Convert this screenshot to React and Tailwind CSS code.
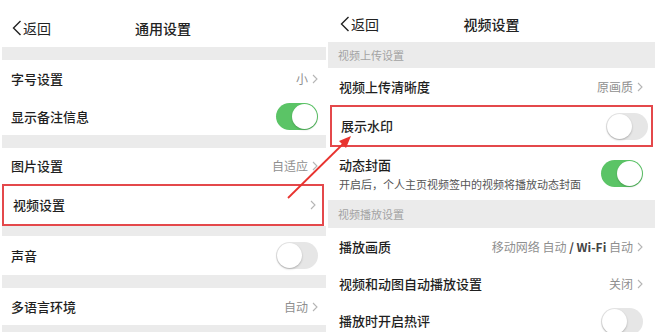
import React from "react";

const font = { fontFamily: '"Noto Sans CJK SC", "Noto Sans", sans-serif' };

function Chevron() {
  return (
    <svg width="6" height="10" viewBox="0 0 6 10" className="ml-[4px] shrink-0">
      <polyline points="1,1 5,5 1,9" fill="none" stroke="#b5b5b5" strokeWidth="1.1" />
    </svg>
  );
}

function BackChevron() {
  return (
    <svg width="10" height="16" viewBox="0 0 10 16" className="shrink-0">
      <polyline points="8.5,1 1.5,8 8.5,15" fill="none" stroke="#222" strokeWidth="1.4" />
    </svg>
  );
}

function Toggle({ on }) {
  return on ? (
    <div className="w-[42px] h-[27px] rounded-full bg-[#5bc466] flex items-center justify-end pr-[1px]">
      <div className="w-[25px] h-[25px] rounded-full bg-white shadow-[0_1px_2px_rgba(0,0,0,0.2)]" />
    </div>
  ) : (
    <div className="w-[42px] h-[27px] rounded-full bg-[#e6e6e6] flex items-center pl-[1px]">
      <div className="w-[25px] h-[25px] rounded-full bg-white shadow-[0_1px_2px_rgba(0,0,0,0.25)]" />
    </div>
  );
}

function Row({ label, value, toggle, h, boxed, pl = "pl-[11px]", pr = "pr-[8px]" }) {
  return (
    <div
      className={`shrink-0 flex items-center justify-between ${pl} ${pr} ${h} ${
        boxed ? "border-2 border-[#e4484b] mx-[2px]" : ""
      }`}
    >
      <span className="text-[13px] font-medium text-[#1f1f1f]">{label}</span>
      {toggle !== undefined ? (
        <Toggle on={toggle} />
      ) : (
        <div className="flex items-center text-[12px] text-[#8f8f8f]">
          {value}
          <Chevron />
        </div>
      )}
    </div>
  );
}

function Section({ title, h }) {
  return (
    <div className={`shrink-0 bg-[#ebebeb] flex items-center pl-[10px] text-[11px] text-[#a3a3a3] ${h}`}>
      {title}
    </div>
  );
}

function Gap({ h }) {
  return <div className={`shrink-0 bg-[#ebebeb] ml-[2px] ${h}`} />;
}

function Header({ title, h, pt }) {
  return (
    <div className={`shrink-0 flex items-center relative ${h} ${pt}`}>
      <div className="flex items-center pl-[12px] gap-[1px]">
        <BackChevron />
        <span className="text-[14px] text-[#222]">返回</span>
      </div>
      <div className="absolute inset-x-0 text-center text-[14px] font-medium text-[#222]">
        {title}
      </div>
    </div>
  );
}

export default function App() {
  return (
    <div className="w-[655px] h-[332px] bg-white flex overflow-hidden relative" style={font}>
      {/* 通用设置 */}
      <div className="w-[326px] flex flex-col shrink-0">
        <Header title="通用设置" h="h-[47px]" pt="pt-[9px]" />
        <Gap h="h-[13px]" />
        <Row label="字号设置" value="小" h="h-[38px]" />
        <Row label="显示备注信息" toggle={true} h="h-[37px]" />
        <Gap h="h-[13px]" />
        <Row label="图片设置" value="自适应" h="h-[36px]" />
        <Row label="视频设置" value="" h="h-[42px]" boxed pl="pl-[9px]" pr="pr-[6px]" />
        <Gap h="h-[10px]" />
        <Row label="声音" toggle={false} h="h-[39px]" />
        <Gap h="h-[13px]" />
        <Row label="多语言环境" value="自动" h="h-[37px]" />
        <Gap h="h-[20px]" />
      </div>

      {/* 视频设置 */}
      <div className="flex-1 flex flex-col ml-[2px]">
        <Header title="视频设置" h="h-[42px]" pt="pt-[6px]" />
        <Section title="视频上传设置" h="h-[26px]" />
        <Row label="视频上传清晰度" value="原画质" h="h-[37px]" pr="pr-[12px]" />
        <Row label="展示水印" toggle={false} h="h-[42px]" boxed pl="pl-[9px]" pr="pr-[3px]" />
        <div className="shrink-0 h-[53px] flex items-center justify-between pl-[11px] pr-[12px]">
          <div className="flex flex-col">
            <span className="text-[13px] font-medium text-[#1f1f1f] leading-[20px]">动态封面</span>
            <span className="text-[11px] text-[#555] leading-[18px]">
              开启后，个人主页视频签中的视频将播放动态封面
            </span>
          </div>
          <Toggle on={true} />
        </div>
        <Section title="视频播放设置" h="h-[28px]" />
        <Row
          label="播放画质"
          value={
            <span>
              移动网络 自动 <span className="font-bold text-[#444]">/ Wi-Fi</span> 自动
            </span>
          }
          h="h-[37px]"
          pr="pr-[12px]"
        />
        <Row label="视频和动图自动播放设置" value="关闭" h="h-[38px]" pr="pr-[12px]" />
        <Row label="播放时开启热评" toggle={false} h="h-[36px]" pr="pr-[12px]" />
      </div>

      {/* 箭头 */}
      <svg className="absolute left-0 top-0 pointer-events-none" width="655" height="332">
        <line x1="288" y1="198" x2="346" y2="141" stroke="#e8332f" strokeWidth="1.8" />
        <polygon points="351,136 339,141 346,148" fill="#e8332f" />
      </svg>
    </div>
  );
}
